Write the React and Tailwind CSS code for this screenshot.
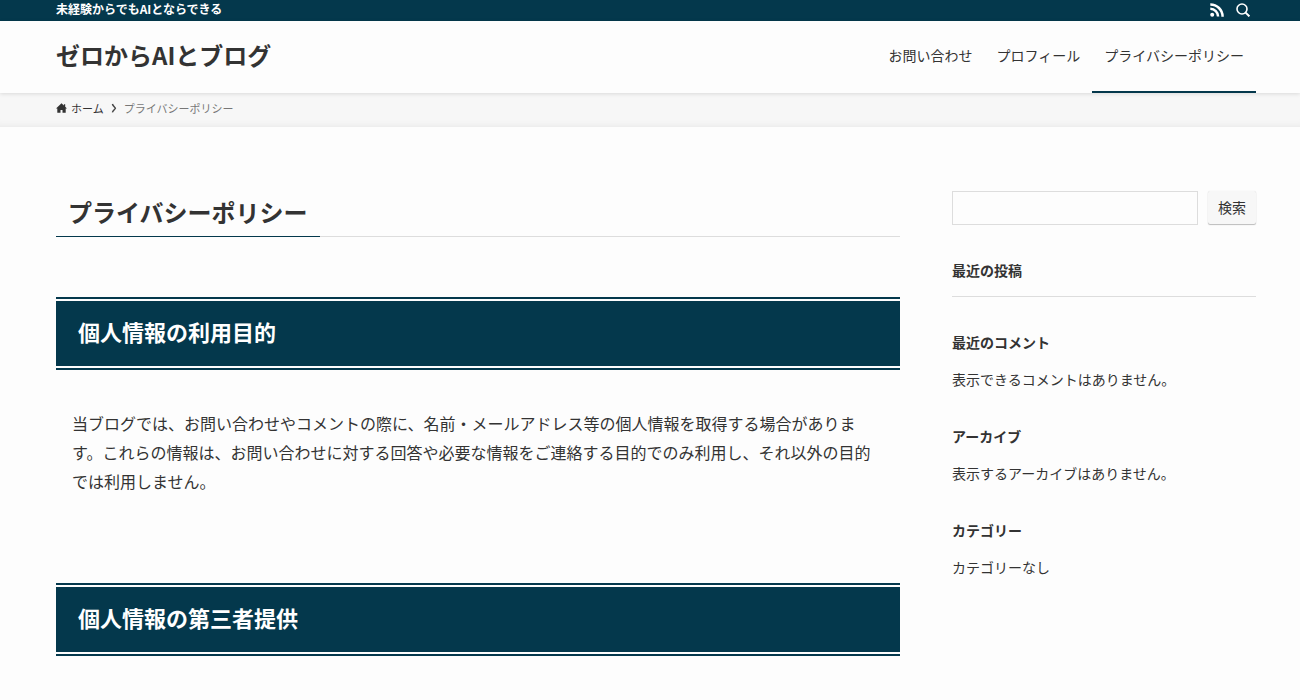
import { useState } from "react";

const NAV = [
  { label: "お問い合わせ", href: "#contact" },
  { label: "プロフィール", href: "#profile" },
  { label: "プライバシーポリシー", href: "#privacy", current: true },
];

const WIDGETS = [
  { title: "最近のコメント", text: "表示できるコメントはありません。" },
  { title: "アーカイブ", text: "表示するアーカイブはありません。" },
  { title: "カテゴリー", text: "カテゴリーなし" },
];

function RssIcon() {
  return (
    <svg viewBox="0 0 14 14" className="w-3.5 h-3.5" fill="none" stroke="currentColor" strokeWidth="2.5">
      <circle cx="2.2" cy="11.7" r="2" fill="currentColor" stroke="none" />
      <path d="M0.3 5.8a7.8 7.8 0 0 1 7.8 7.8" />
      <path d="M0.3 1.4a12.3 12.3 0 0 1 12.3 12.3" />
    </svg>
  );
}

function SearchIcon() {
  return (
    <svg viewBox="0 0 14 14" className="w-3.5 h-3.5" fill="none" stroke="currentColor" strokeWidth="1.6">
      <circle cx="6" cy="6" r="5" />
      <path d="M9.6 9.6l3.8 3.8" strokeWidth="2" />
    </svg>
  );
}

function HomeIcon() {
  return (
    <svg viewBox="0 0 11 10" className="w-[11px] h-2.5" fill="currentColor">
      <path d="M5.5 0.2L0 5.6h1.3V9.8h3.2V7h2v2.8h3.2V5.6H11L9.2 3.8V1.2H7.9v1.3z" />
    </svg>
  );
}

function SectionTitle({ children }) {
  return (
    <h2 className="border-y-2 border-[#04384c] py-0.5">
      <span className="block bg-[#04384c] text-white text-[22px] leading-[33px] font-bold px-[22px] pt-3.5 pb-[18px]">
        {children}
      </span>
    </h2>
  );
}

export default function App() {
  const [query, setQuery] = useState("");

  return (
    <div className="min-h-screen bg-[#fdfdfd] text-[#333] font-['Noto_Sans_CJK_JP',sans-serif]" lang="ja">
      {/* Top bar */}
      <div className="bg-[#04384c] text-white">
        <div className="flex items-center justify-between h-[21px] pl-14 pr-[50px] pb-0.5">
          <p className="text-xs leading-4 font-bold pb-0.5">未経験からでもAIとならできる</p>
          <div className="flex items-center gap-3">
            <a href="#feed" aria-label="RSS"><RssIcon /></a>
            <button type="button" aria-label="検索を開く"><SearchIcon /></button>
          </div>
        </div>
      </div>

      {/* Header */}
      <header className="relative flex items-stretch justify-between h-[72px] pl-14 pr-11 bg-[#fdfdfd] shadow-[0_1px_4px_rgba(0,0,0,0.12)]">
        <a href="#top" className="self-center text-2xl font-bold pb-1">ゼロからAIとブログ</a>
        <nav className="flex">
          {NAV.map((item) => (
            <a
              key={item.label}
              href={item.href}
              className={`flex items-center px-3 pb-0.5 text-sm border-b-2 ${
                item.current ? "border-[#04384c]" : "border-transparent"
              }`}
            >
              {item.label}
            </a>
          ))}
        </nav>
      </header>

      {/* Breadcrumb */}
      <div className="bg-[#f7f7f7] shadow-[inset_0_-8px_8px_-8px_rgba(0,0,0,0.08)]">
        <ol className="flex items-center h-[34px] pl-14 pr-11 pb-1 text-[11px] leading-4">
          <li>
            <a href="#top" className="flex items-center gap-1">
              <HomeIcon />
              ホーム
            </a>
          </li>
          <li className="flex items-center gap-[7px] pl-[7px] text-[#777]">
            <svg viewBox="0 0 6 10" className="w-1.5 h-2.5 text-[#444]" fill="none" stroke="currentColor" strokeWidth="1.4">
              <path d="M1.4 1C1.9 3 3.8 3.9 4.4 5.2C3.8 6.5 1.9 7.4 1.4 9.4" />
            </svg>
            プライバシーポリシー
          </li>
        </ol>
      </div>

      <div className="flex items-start gap-[52px] pl-14 pr-11 pt-16 pb-10">
        <main className="flex-1 min-w-0">
          <div className="border-b border-[#ddd]">
            <h1 className="inline-block -mb-px px-3 pb-[3px] align-top border-b border-[#04384c] text-2xl leading-[42px] font-bold">
              プライバシーポリシー
            </h1>
          </div>

          <div className="mt-[60px]">
            <SectionTitle>個人情報の利用目的</SectionTitle>
            <p className="px-4 pt-[39px] pb-[87px] text-base leading-[29px]">
              当ブログでは、お問い合わせやコメントの際に、名前・メールアドレス等の個人情報を取得する場合があります。これらの情報は、お問い合わせに対する回答や必要な情報をご連絡する目的でのみ利用し、それ以外の目的では利用しません。
            </p>
            <SectionTitle>個人情報の第三者提供</SectionTitle>
          </div>
        </main>

        <aside className="w-[304px] shrink-0 text-sm">
          <form className="flex gap-2.5" onSubmit={(e) => e.preventDefault()}>
            <input
              type="search"
              aria-label="検索"
              value={query}
              onChange={(e) => setQuery(e.target.value)}
              className="flex-1 min-w-0 h-[34px] px-2 border border-[#ddd] outline-none"
            />
            <button
              type="submit"
              className="h-[33px] px-2.5 pb-0.5 rounded-xs bg-[#f7f7f7] shadow-[0_1px_1px_rgba(0,0,0,0.25),0_0_1px_rgba(0,0,0,0.15)]"
            >
              検索
            </button>
          </form>

          <section className="mt-[35px] pb-4 border-b border-[#ddd]">
            <h2 className="font-bold leading-5">最近の投稿</h2>
          </section>

          <div className="flex flex-col gap-[37px] mt-[35px]">
            {WIDGETS.map((w) => (
              <section key={w.title}>
                <h2 className="font-bold leading-5">{w.title}</h2>
                <p className="mt-[17px] leading-5">{w.text}</p>
              </section>
            ))}
          </div>
        </aside>
      </div>
    </div>
  );
}
